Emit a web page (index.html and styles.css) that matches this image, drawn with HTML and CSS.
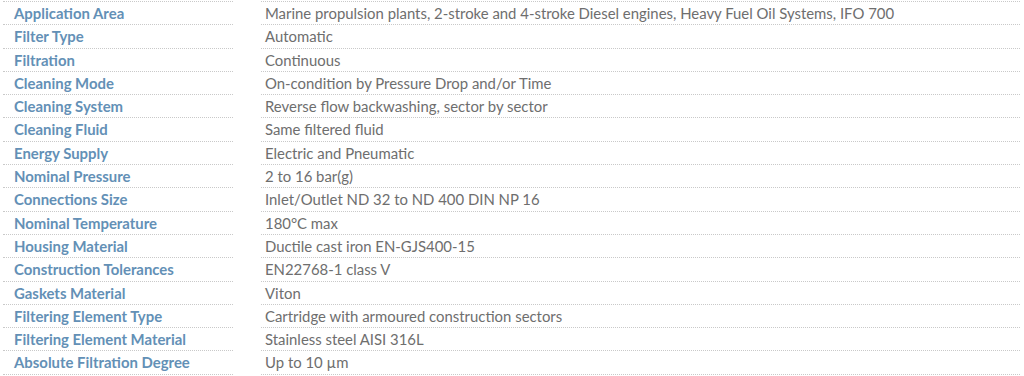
FILE: index.html
```html
<!DOCTYPE html>
<html>
<head>
<meta charset="utf-8">
<link rel="stylesheet" href="styles.css">
</head>
<body>
<div class="specs">
  <div class="k">Application Area</div><div class="v">Marine propulsion plants, 2-stroke and 4-stroke Diesel engines, Heavy Fuel Oil Systems, IFO 700</div>
  <div class="k">Filter Type</div><div class="v">Automatic</div>
  <div class="k">Filtration</div><div class="v">Continuous</div>
  <div class="k">Cleaning Mode</div><div class="v">On-condition by Pressure Drop and/or Time</div>
  <div class="k">Cleaning System</div><div class="v">Reverse flow backwashing, sector by sector</div>
  <div class="k">Cleaning Fluid</div><div class="v">Same filtered fluid</div>
  <div class="k">Energy Supply</div><div class="v">Electric and Pneumatic</div>
  <div class="k">Nominal Pressure</div><div class="v">2 to 16 bar(g)</div>
  <div class="k">Connections Size</div><div class="v">Inlet/Outlet ND 32 to ND 400 DIN NP 16</div>
  <div class="k">Nominal Temperature</div><div class="v">180°C max</div>
  <div class="k">Housing Material</div><div class="v">Ductile cast iron EN-GJS400-15</div>
  <div class="k">Construction Tolerances</div><div class="v">EN22768-1 class V</div>
  <div class="k">Gaskets Material</div><div class="v">Viton</div>
  <div class="k">Filtering Element Type</div><div class="v">Cartridge with armoured construction sectors</div>
  <div class="k">Filtering Element Material</div><div class="v">Stainless steel AISI 316L</div>
  <div class="k">Absolute Filtration Degree</div><div class="v">Up to 10 µm</div>
</div>
</body>
</html>
```
FILE: styles.css
```css
html, body { margin: 0; padding: 0; background: #fff; }
body { font-family: Lato, "Open Sans", sans-serif; }
.specs {
  display: grid;
  grid-template-columns: 230px 759px;
  column-gap: 28px;
  padding: 1px 0 0 3px;
}
.k, .v {
  height: 22.3px;
  line-height: 23px;
  border-bottom: 1px dotted #c9c9c9;
  font-size: 14.9px;
  white-space: nowrap;
}
.k:nth-child(1), .v:nth-child(2) { border-top: 1px dotted #c9c9c9; }
.k { color: #6390b6; font-weight: 700; padding-left: 11px; }
.v { color: #6e6e6e; padding-left: 4px; }
```
